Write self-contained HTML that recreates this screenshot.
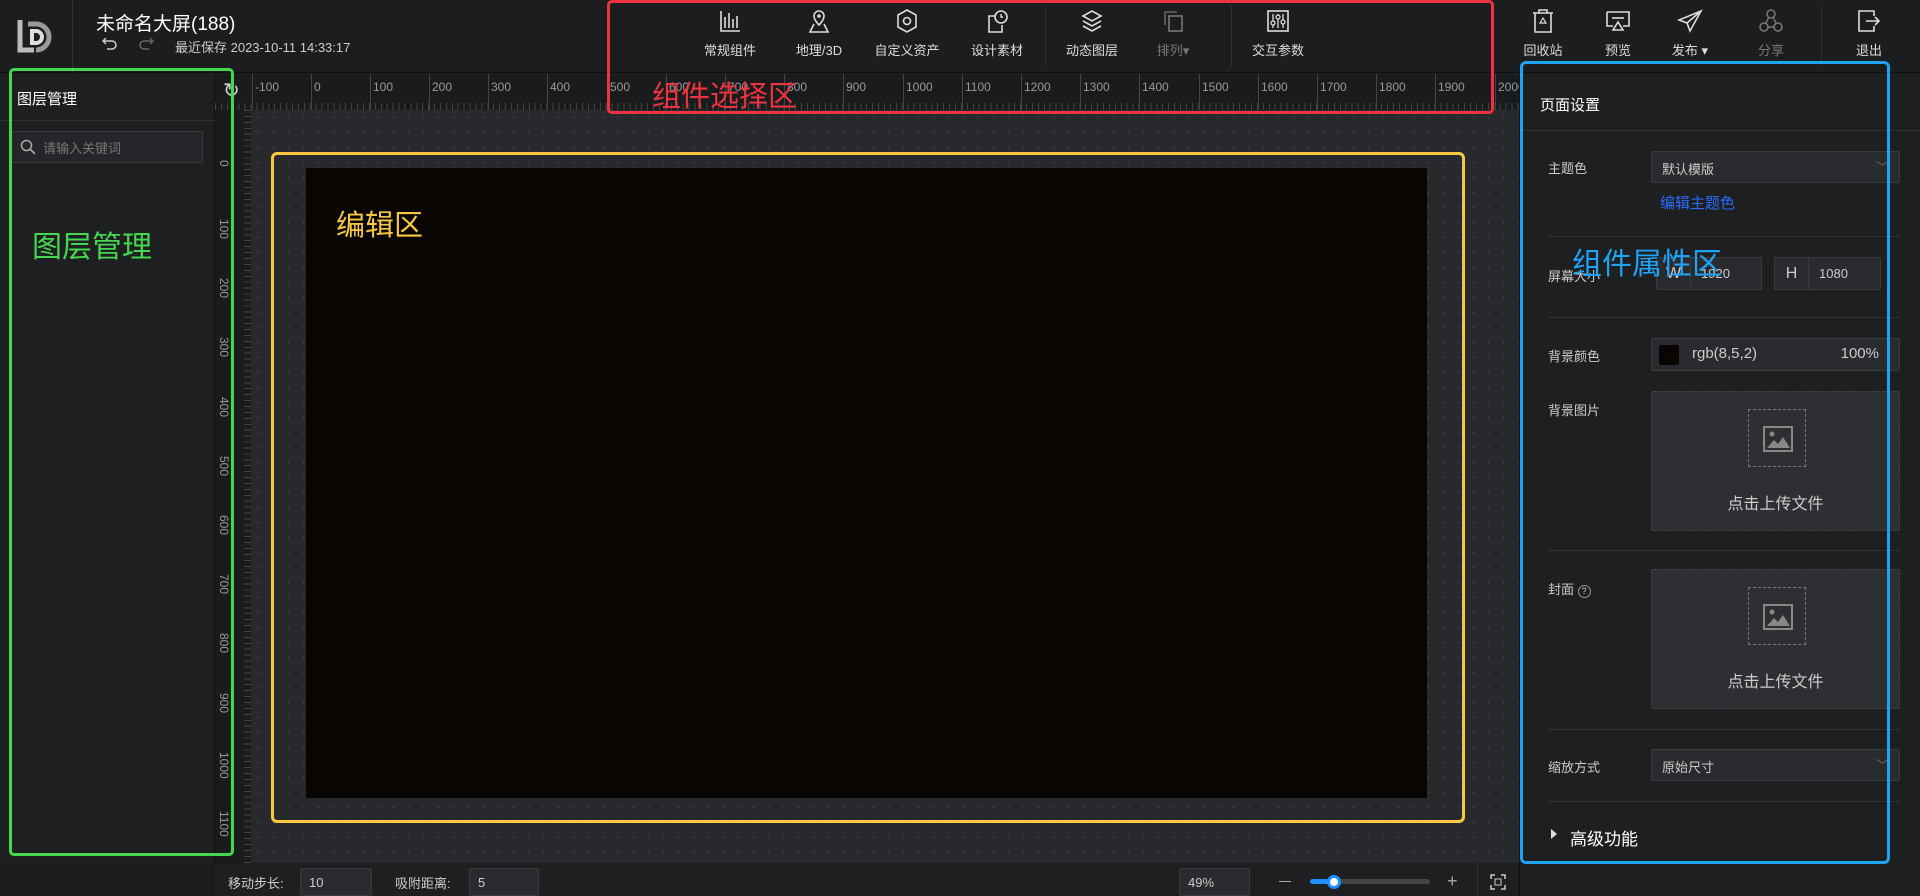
<!DOCTYPE html>
<html><head><meta charset="utf-8">
<style>
*{box-sizing:border-box;margin:0;padding:0}
body{width:1920px;height:896px;overflow:hidden;background:#1c1d1f;font-family:"Liberation Sans","Noto Sans CJK SC",sans-serif;color:#ddd;position:relative}
.abs{position:absolute}
#header{left:0;top:0;width:1920px;height:73px;background:#1c1d1f;border-bottom:1px solid #111}
.tb{position:absolute;top:8px;width:80px;margin-left:-40px;text-align:center;font-size:13px;color:#ddd}
.tb svg{display:block;margin:0 auto 6px;width:26px;height:26px}
.vdiv{position:absolute;top:6px;width:1px;height:60px;background:#333}
#left{left:0;top:74px;width:215px;height:789px;background:#1e1f21;border-right:1px solid #111}
#hr{left:215px;top:74px;width:1304px;height:36px;background:#1a1b1d;
 background-image:repeating-linear-gradient(90deg,#444 0 1px,transparent 1px 5.92px);background-size:100% 7px;background-repeat:no-repeat;background-position:0 29px}
#vr{left:215px;top:110px;width:36px;height:753px;background:#1a1b1d;
 background-image:repeating-linear-gradient(180deg,#444 0 1px,transparent 1px 5.92px);background-size:7px 100%;background-repeat:no-repeat;background-position:29px 0}
#canvas{left:251px;top:110px;width:1268px;height:753px;background-color:#27292d;
 background-image:radial-gradient(circle,#3a3d42 1px,transparent 1.3px);background-size:15px 15px}
.hn{position:absolute;top:6px;font-size:12px;color:#999}
.hl{position:absolute;top:0;width:1px;height:36px;background:#444}
.vn{position:absolute;left:2px;font-size:12px;color:#999;transform:rotate(90deg);transform-origin:left top}
#right{left:1519px;top:74px;width:401px;height:822px;background:#1e1f21;border-left:1px solid #111}
.lab{position:absolute;font-size:13px;color:#ccc}
.inp{position:absolute;background:#2a2b2f;border:1px solid #3a3b3f;border-radius:2px;font-size:13px;color:#ccc}
.rdiv{position:absolute;left:1548px;width:352px;height:1px;background:#333}
.up{position:absolute;left:1651px;width:249px;background:#2e2f33;border:1px dashed #444;border-radius:2px}
.up .ib{position:absolute;left:96px;top:17px;width:58px;height:58px;border:1px dashed #777}
.up .t{position:absolute;left:0;width:100%;text-align:center;font-size:16px;color:#ccc}
#bottom{left:215px;top:863px;width:1304px;height:33px;background:#1e1f21}
</style></head><body>

<div id="header" class="abs"></div>
<svg class="abs" style="left:16px;top:16px" width="42" height="42" viewBox="0 0 42 42">
<path d="M4 4v30h14" fill="none" stroke="#bbb" stroke-width="5"/>
<path d="M12 8h8a13 13 0 0 1 0 26" fill="none" stroke="#999" stroke-width="5"/>
<path d="M16 15h4a6 6 0 0 1 0 12h-4z" fill="none" stroke="#ddd" stroke-width="4"/>
</svg>
<div class="abs" style="left:72px;top:0;width:1px;height:73px;background:#333"></div>
<div class="abs" style="left:96px;top:9px;font-size:19px;color:#fff">未命名大屏(188)</div>
<svg class="abs" style="left:102px;top:36px" width="16" height="14" viewBox="0 0 16 14"><path d="M4 2L1 5l3 3M1 5h9a4 4 0 0 1 0 8H5" fill="none" stroke="#ccc" stroke-width="1.5"/></svg>
<svg class="abs" style="left:138px;top:36px" width="16" height="14" viewBox="0 0 16 14"><path d="M12 2l3 3-3 3M15 5H6a4 4 0 0 0 0 8h5" fill="none" stroke="#666" stroke-width="1.5"/></svg>
<div class="abs" style="left:175px;top:37px;font-size:13px;color:#ccc">最近保存 2023-10-11 14:33:17</div>

<div class="tb" style="left:730px"><svg viewBox="0 0 26 26"><path d="M4 3v20h19M8 20V9M12 20V5M16 20V11M20 20V8" fill="none" stroke="#ddd" stroke-width="1.6"/></svg>常规组件</div>
<div class="tb" style="left:819px"><svg viewBox="0 0 26 26"><path d="M13 3a5 5 0 0 1 5 5c0 4-5 9-5 9s-5-5-5-9a5 5 0 0 1 5-5z" fill="none" stroke="#ddd" stroke-width="1.6"/><circle cx="13" cy="8" r="1.8" fill="#ddd"/><path d="M8 16l-4 8h18l-4-8" fill="none" stroke="#ddd" stroke-width="1.6"/></svg>地理/3D</div>
<div class="tb" style="left:907px"><svg viewBox="0 0 26 26"><path d="M13 2l9 5v12l-9 5-9-5V7z" fill="none" stroke="#ddd" stroke-width="1.6"/><circle cx="13" cy="13" r="3.5" fill="none" stroke="#ddd" stroke-width="1.6"/></svg>自定义资产</div>
<div class="tb" style="left:997px"><svg viewBox="0 0 26 26"><path d="M11 8H5v16h13v-7" fill="none" stroke="#ddd" stroke-width="1.6"/><circle cx="17" cy="9" r="6" fill="none" stroke="#ddd" stroke-width="1.6"/><path d="M17 6v3h2" fill="none" stroke="#ddd" stroke-width="1.4"/></svg>设计素材</div>
<div class="vdiv" style="left:1045px"></div>
<div class="tb" style="left:1092px"><svg viewBox="0 0 26 26"><path d="M13 3l9 5-9 5-9-5zM4 13l9 5 9-5M4 18l9 5 9-5" fill="none" stroke="#ddd" stroke-width="1.6"/></svg>动态图层</div>
<div class="tb" style="left:1173px;color:#777"><svg viewBox="0 0 26 26"><path d="M5 17V4h12" fill="none" stroke="#666" stroke-width="1.6"/><rect x="9" y="8" width="13" height="15" fill="none" stroke="#777" stroke-width="1.6"/></svg>排列▾</div>
<div class="vdiv" style="left:1231px"></div>
<div class="tb" style="left:1278px"><svg viewBox="0 0 26 26"><rect x="3" y="3" width="20" height="20" fill="none" stroke="#ddd" stroke-width="1.6"/><path d="M8 6v14M13 6v14M18 6v14" stroke="#ddd" stroke-width="1.3"/><circle cx="8" cy="15" r="2" fill="#1c1d1f" stroke="#ddd" stroke-width="1.3"/><circle cx="13" cy="9" r="2" fill="#1c1d1f" stroke="#ddd" stroke-width="1.3"/><circle cx="18" cy="14" r="2" fill="#1c1d1f" stroke="#ddd" stroke-width="1.3"/></svg>交互参数</div>

<div class="tb" style="left:1543px"><svg viewBox="0 0 26 26"><path d="M3 5h20M9 5V2h8v3M5 5v19h16V5" fill="none" stroke="#ddd" stroke-width="1.6"/><path d="M13 10l-3 5h6z" fill="none" stroke="#ddd" stroke-width="1.2"/></svg>回收站</div>
<div class="tb" style="left:1618px"><svg viewBox="0 0 26 26"><path d="M2 4h22v14h-6M8 18H2V4" fill="none" stroke="#ddd" stroke-width="1.6"/><path d="M7 10h12" stroke="#ddd" stroke-width="1.6"/><path d="M13 14l-5 8h10z" fill="none" stroke="#ddd" stroke-width="1.6"/></svg>预览</div>
<div class="tb" style="left:1690px"><svg viewBox="0 0 26 26"><path d="M24 3L2 12l8 3 3 8zM10 15l14-12" fill="none" stroke="#ddd" stroke-width="1.6"/></svg>发布 ▾</div>
<div class="tb" style="left:1771px;color:#777"><svg viewBox="0 0 26 26"><circle cx="13" cy="6" r="4" fill="none" stroke="#777" stroke-width="1.6"/><circle cx="6" cy="19" r="4" fill="none" stroke="#777" stroke-width="1.6"/><circle cx="20" cy="19" r="4" fill="none" stroke="#777" stroke-width="1.6"/><path d="M11 9l-3 6M15 9l3 6M10 19h6" stroke="#777" stroke-width="1.4"/></svg>分享</div>
<div class="vdiv" style="left:1821px"></div>
<div class="tb" style="left:1869px"><svg viewBox="0 0 26 26"><path d="M18 8V3H3v20h15v-5" fill="none" stroke="#ddd" stroke-width="1.6"/><path d="M10 13h13M19 9l4 4-4 4" fill="none" stroke="#ddd" stroke-width="1.6"/></svg>退出</div>

<div id="left" class="abs"></div>
<div class="abs" style="left:17px;top:88px;font-size:15px;color:#fff">图层管理</div>
<div class="abs" style="left:0;top:120px;width:215px;height:1px;background:#333"></div>
<div class="abs" style="left:11px;top:131px;width:192px;height:32px;background:#252629;border:1px solid #3a3b3f;border-radius:2px"></div>
<svg class="abs" style="left:20px;top:139px" width="16" height="16" viewBox="0 0 16 16"><circle cx="6.5" cy="6.5" r="5" fill="none" stroke="#aaa" stroke-width="1.5"/><path d="M10 10l5 5" stroke="#aaa" stroke-width="1.6"/></svg>
<div class="abs" style="left:43px;top:138px;font-size:13px;color:#777">请输入关键词</div>

<div id="canvas" class="abs"></div>
<div id="hr" class="abs">
<div class="hl" style="left:37px"></div><span class="hn" style="left:40px">-100</span>
<div class="hl" style="left:96px"></div><span class="hn" style="left:99px">0</span>
<div class="hl" style="left:155px"></div><span class="hn" style="left:158px">100</span>
<div class="hl" style="left:214px"></div><span class="hn" style="left:217px">200</span>
<div class="hl" style="left:273px"></div><span class="hn" style="left:276px">300</span>
<div class="hl" style="left:332px"></div><span class="hn" style="left:335px">400</span>
<div class="hl" style="left:392px"></div><span class="hn" style="left:395px">500</span>
<div class="hl" style="left:451px"></div><span class="hn" style="left:454px">600</span>
<div class="hl" style="left:510px"></div><span class="hn" style="left:513px">700</span>
<div class="hl" style="left:569px"></div><span class="hn" style="left:572px">800</span>
<div class="hl" style="left:628px"></div><span class="hn" style="left:631px">900</span>
<div class="hl" style="left:688px"></div><span class="hn" style="left:691px">1000</span>
<div class="hl" style="left:747px"></div><span class="hn" style="left:750px">1100</span>
<div class="hl" style="left:806px"></div><span class="hn" style="left:809px">1200</span>
<div class="hl" style="left:865px"></div><span class="hn" style="left:868px">1300</span>
<div class="hl" style="left:924px"></div><span class="hn" style="left:927px">1400</span>
<div class="hl" style="left:984px"></div><span class="hn" style="left:987px">1500</span>
<div class="hl" style="left:1043px"></div><span class="hn" style="left:1046px">1600</span>
<div class="hl" style="left:1102px"></div><span class="hn" style="left:1105px">1700</span>
<div class="hl" style="left:1161px"></div><span class="hn" style="left:1164px">1800</span>
<div class="hl" style="left:1220px"></div><span class="hn" style="left:1223px">1900</span>
<div class="hl" style="left:1280px"></div><span class="hn" style="left:1283px">2000</span>
</div>
<div class="abs" style="left:223px;top:78px;font-size:20px;color:#ccc">↻</div>
<div id="vr" class="abs">
<span class="vn" style="top:50px;left:16px">0</span>
<span class="vn" style="top:109px;left:16px">100</span>
<span class="vn" style="top:168px;left:16px">200</span>
<span class="vn" style="top:227px;left:16px">300</span>
<span class="vn" style="top:287px;left:16px">400</span>
<span class="vn" style="top:346px;left:16px">500</span>
<span class="vn" style="top:405px;left:16px">600</span>
<span class="vn" style="top:464px;left:16px">700</span>
<span class="vn" style="top:523px;left:16px">800</span>
<span class="vn" style="top:583px;left:16px">900</span>
<span class="vn" style="top:642px;left:16px">1000</span>
<span class="vn" style="top:701px;left:16px">1100</span>
</div>
<div class="abs" style="left:306px;top:168px;width:1121px;height:630px;background:#080502"></div>

<div id="bottom" class="abs"></div>
<div class="abs" style="left:228px;top:873px;font-size:13px;color:#ccc">移动步长:</div>
<div class="inp" style="left:300px;top:868px;width:72px;height:28px;padding:6px 8px">10</div>
<div class="abs" style="left:395px;top:873px;font-size:13px;color:#ccc">吸附距离:</div>
<div class="inp" style="left:469px;top:868px;width:70px;height:28px;padding:6px 8px">5</div>
<div class="inp" style="left:1179px;top:868px;width:71px;height:28px;padding:6px 8px">49%</div>
<div class="abs" style="left:1279px;top:881px;width:12px;height:1px;background:#aaa"></div>
<div class="abs" style="left:1310px;top:879px;width:120px;height:5px;background:#444;border-radius:3px"></div>
<div class="abs" style="left:1310px;top:879px;width:24px;height:5px;background:#1e90ff;border-radius:3px"></div>
<div class="abs" style="left:1327px;top:875px;width:14px;height:14px;background:#fff;border:3px solid #1e90ff;border-radius:50%"></div>
<div class="abs" style="left:1447px;top:874px;font-size:18px;color:#aaa;line-height:14px">+</div>
<svg class="abs" style="left:1490px;top:874px" width="16" height="16" viewBox="0 0 16 16"><path d="M1 5V1h4M11 1h4v4M15 11v4h-4M5 15H1v-4" fill="none" stroke="#ccc" stroke-width="1.5"/><rect x="5" y="5" width="6" height="6" fill="none" stroke="#ccc"/></svg>
<div class="abs" style="left:1477px;top:863px;width:1px;height:33px;background:#333"></div>

<div id="right" class="abs"></div>
<div class="abs" style="left:1540px;top:94px;font-size:15px;color:#fff">页面设置</div>
<div class="abs" style="left:1520px;top:130px;width:400px;height:1px;background:#333"></div>
<div class="lab" style="left:1548px;top:158px">主题色</div>
<div class="inp" style="left:1651px;top:151px;width:249px;height:32px;padding:7px 10px">默认模版<span style="position:absolute;right:10px;top:5px;color:#666">﹀</span></div>
<div class="abs" style="left:1660px;top:192px;font-size:15px;color:#2b6bff">编辑主题色</div>
<div class="rdiv" style="top:236px"></div>
<div class="lab" style="left:1548px;top:266px">屏幕大小</div>
<div class="inp" style="left:1656px;top:257px;width:106px;height:33px"><span style="position:absolute;left:0;top:0;width:34px;height:31px;border-right:1px solid #3a3b3f;text-align:center;line-height:31px;font-size:16px">W</span><span style="position:absolute;left:44px;top:8px">1920</span></div>
<div class="inp" style="left:1774px;top:257px;width:107px;height:33px"><span style="position:absolute;left:0;top:0;width:34px;height:31px;border-right:1px solid #3a3b3f;text-align:center;line-height:31px;font-size:16px">H</span><span style="position:absolute;left:44px;top:8px">1080</span></div>
<div class="rdiv" style="top:317px"></div>
<div class="lab" style="left:1548px;top:346px">背景颜色</div>
<div class="inp" style="left:1651px;top:338px;width:249px;height:33px"><span style="position:absolute;left:7px;top:6px;width:20px;height:20px;background:#080502;border-radius:2px"></span><span style="position:absolute;left:40px;top:6px;font-size:15px">rgb(8,5,2)</span><span style="position:absolute;right:20px;top:6px;font-size:15px">100%</span></div>
<div class="lab" style="left:1548px;top:400px">背景图片</div>
<div class="up" style="top:391px;height:140px"><div class="ib"><svg style="position:absolute;left:14px;top:16px" width="30" height="26" viewBox="0 0 30 26"><rect x="1" y="1" width="28" height="24" fill="none" stroke="#888" stroke-width="2"/><circle cx="9" cy="8" r="2.5" fill="#888"/><path d="M4 22l7-8 4 4 5-7 7 11z" fill="#888"/></svg></div><div class="t" style="top:98px">点击上传文件</div></div>
<div class="rdiv" style="top:550px"></div>
<div class="lab" style="left:1548px;top:579px">封面 <span style="display:inline-block;width:13px;height:13px;border:1px solid #999;border-radius:50%;font-size:9px;text-align:center;line-height:11px">?</span></div>
<div class="up" style="top:569px;height:140px"><div class="ib"><svg style="position:absolute;left:14px;top:16px" width="30" height="26" viewBox="0 0 30 26"><rect x="1" y="1" width="28" height="24" fill="none" stroke="#888" stroke-width="2"/><circle cx="9" cy="8" r="2.5" fill="#888"/><path d="M4 22l7-8 4 4 5-7 7 11z" fill="#888"/></svg></div><div class="t" style="top:98px">点击上传文件</div></div>
<div class="rdiv" style="top:729px"></div>
<div class="lab" style="left:1548px;top:757px">缩放方式</div>
<div class="inp" style="left:1651px;top:749px;width:249px;height:32px;padding:7px 10px">原始尺寸<span style="position:absolute;right:10px;top:5px;color:#666">﹀</span></div>
<div class="rdiv" style="top:801px"></div>
<div class="abs" style="left:1551px;top:829px;width:0;height:0;border-left:6px solid #ddd;border-top:5px solid transparent;border-bottom:5px solid transparent"></div>
<div class="abs" style="left:1570px;top:825px;font-size:17px;color:#fff">高级功能</div>

<div class="abs" style="left:607px;top:0;width:887px;height:114px;border:3px solid #ee3340;border-radius:5px"></div>
<div class="abs" style="left:652px;top:73px;font-size:29px;color:#ee3340">组件选择区</div>
<div class="abs" style="left:9px;top:68px;width:225px;height:788px;border:3px solid #46d650;border-radius:5px"></div>
<div class="abs" style="left:32px;top:222px;font-size:30px;color:#46d650">图层管理</div>
<div class="abs" style="left:271px;top:152px;width:1194px;height:671px;border:3px solid #f8c842;border-radius:6px"></div>
<div class="abs" style="left:336px;top:202px;font-size:29px;color:#f8c842">编辑区</div>
<div class="abs" style="left:1520px;top:61px;width:370px;height:803px;border:3px solid #1ea3f5;border-radius:6px"></div>
<div class="abs" style="left:1572px;top:239px;font-size:30px;color:#1ea3f5">组件属性区</div>
</body></html>
